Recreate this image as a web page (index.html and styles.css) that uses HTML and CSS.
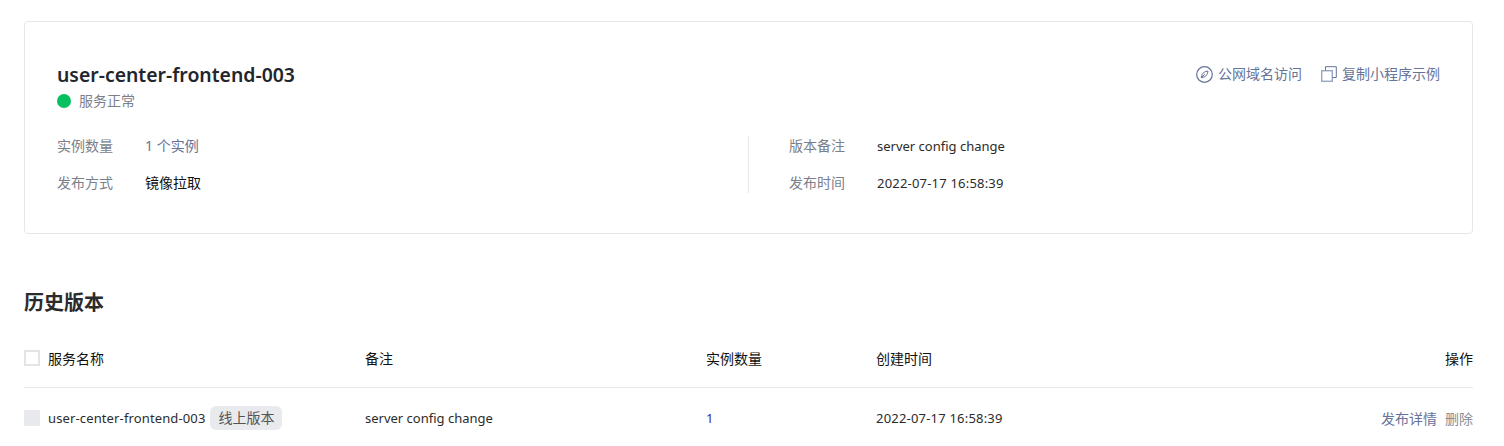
FILE: index.html
```html
<!DOCTYPE html>
<html lang="zh-CN">
  <head>
    <meta charset="UTF-8" />
    <title>user-center-frontend-003</title>
    <link rel="stylesheet" href="styles.css">
  </head>
  <body>
    <div class="page">
      <div class="card">
        <div class="card-head">
          <div>
            <h1 class="title">user-center-frontend-003</h1>
            <div class="status"><span class="status-dot"></span>服务正常</div>
          </div>
          <div class="links">
            <span class="link">
              <svg class="icon" width="17" height="17" viewBox="0 0 17 17" fill="none" stroke="#66739a">
                <circle cx="8.500" cy="8.500" r="7.800" stroke-width="1.200" />
                <path d="M12 5c-2.800.4-5 1.600-5.800 3.400-.4 1-.4 2-1 3.400 1.400-.6 2.400-.6 3.400-1 1.800-.8 3-3 3.400-5.800zM5.400 11.600l3.400-3.400" />
              </svg>
              公网域名访问
            </span>
            <span class="link">
              <svg class="icon" width="16" height="16" viewBox="0 0 16 16" fill="none" stroke="#66739a">
                <rect x="0.700" y="4.700" width="10.600" height="10.600" stroke="#9aa5bf" stroke-width="1.400" />
                <path d="M4.500 4.500V.7h10.800v10.800h-3.800" />
              </svg>
              复制小程序示例
            </span>
          </div>
        </div>
        <div class="info">
          <div class="info-col">
            <div class="info-row"><span class="info-label">实例数量</span><span class="info-muted">1 个实例</span></div>
            <div class="info-row"><span class="info-label">发布方式</span><span class="info-dark">镜像拉取</span></div>
          </div>
          <div class="info-col info-col-right">
            <div class="info-row"><span class="info-label">版本备注</span><span>server config change</span></div>
            <div class="info-row"><span class="info-label">发布时间</span><span class="date">2022-07-17 16:58:39</span></div>
          </div>
        </div>
      </div>

      <h2 class="section-title">历史版本</h2>

      <div class="table">
        <div class="table-row table-head">
          <div class="cell-name"><span class="checkbox"></span>服务名称</div>
          <div class="cell-note">备注</div>
          <div class="cell-count">实例数量</div>
          <div class="cell-time">创建时间</div>
          <div class="cell-ops">操作</div>
        </div>
        <div class="table-row table-body">
          <div class="cell-name"><span class="checkbox checkbox-disabled"></span><span class="name">user-center-frontend-003</span><span class="tag">线上版本</span></div>
          <div class="cell-note">server config change</div>
          <div class="cell-count count-link">1</div>
          <div class="cell-time date">2022-07-17 16:58:39</div>
          <div class="cell-ops"><span class="op-link">发布详情</span><span class="op-muted">删除</span></div>
        </div>
      </div>
    </div>
  </body>
</html>
```

FILE: styles.css
```css
html,
body {
  margin: 0;
  height: 446px;
  overflow: hidden;
  background: #fff;
}
body {
  font-family: "Noto Sans", "Noto Sans CJK SC", sans-serif;
  font-size: 13px;
  color: #2b2b2b;
}
.page {
  padding: 21px 31px 0 24px;
}
.card {
  box-sizing: border-box;
  height: 213px;
  border: 1px solid #e5e7eb;
  border-radius: 4px;
  padding: 39px 32px 0;
}
.card-head {
  display: flex;
  justify-content: space-between;
  align-items: flex-start;
}
.title {
  margin: 0;
  font-size: 19.400px;
  line-height: 28px;
  font-weight: 600;
  color: #22252b;
}
.status {
  display: flex;
  align-items: center;
  gap: 8px;
  margin-top: 2px;
  line-height: 20px;
  font-size: 14px;
  color: #7b7f8a;
}
.status-dot {
  width: 14px;
  height: 14px;
  border-radius: 50%;
  background: #07c160;
}
.links {
  display: flex;
  gap: 19px;
  margin-top: 3px;
  font-size: 14px;
  color: #66739a;
}
.link {
  display: flex;
  align-items: center;
  gap: 5px;
  line-height: 20px;
}
.info {
  display: flex;
  margin-top: 25px;
}
.info-col {
  flex: none;
  width: 691px;
  height: 57px;
}
.info-col-right {
  flex: 1;
  border-left: 1px solid #e5e7eb;
  padding-left: 40px;
}
.info-row {
  display: flex;
  align-items: center;
  height: 20px;
  margin-bottom: 17px;
  line-height: 20px;
}
.info-label {
  width: 88px;
  font-size: 14px;
  color: #7b7f8a;
}
.info-muted {
  font-size: 14px;
  color: #66739a;
}
.info-dark {
  font-size: 14px;
  color: #111;
}
.date {
  letter-spacing: 0.2px;
}
.section-title {
  margin: 55px 0 0;
  font-size: 20px;
  line-height: 28px;
  font-weight: 600;
  color: #2b2b2b;
}
.table {
  margin-top: 13px;
}
.table-row {
  display: flex;
  align-items: center;
}
.table-head {
  height: 55px;
  padding-bottom: 2px;
  border-bottom: 1px solid #e5e7eb;
  font-size: 14px;
  color: #111;
}
.table-body {
  height: 60px;
}
.cell-name {
  display: flex;
  align-items: center;
  width: 341px;
}
.cell-note {
  width: 341px;
}
.cell-count {
  width: 170px;
}
.cell-time {
  width: 240px;
}
.cell-ops {
  flex: 1;
  text-align: right;
}
.checkbox {
  box-sizing: border-box;
  width: 16px;
  height: 16px;
  margin-right: 8px;
  border: 2px solid #e2e4e8;
}
.checkbox-disabled {
  background: #e8e9ec;
  border-color: #e8e9ec;
}
.name {
  letter-spacing: 0.130px;
}
.tag {
  margin-left: 5px;
  padding: 0 8px;
  border-radius: 6px;
  background: #e9eaed;
  font-size: 14px;
  line-height: 24px;
  color: #555;
}
.count-link {
  color: #3b1fa8;
}
.op-link,
.op-muted {
  font-size: 14px;
}
.op-link {
  color: #66739a;
}
.op-muted {
  margin-left: 8px;
  color: #8a8d96;
}
```
